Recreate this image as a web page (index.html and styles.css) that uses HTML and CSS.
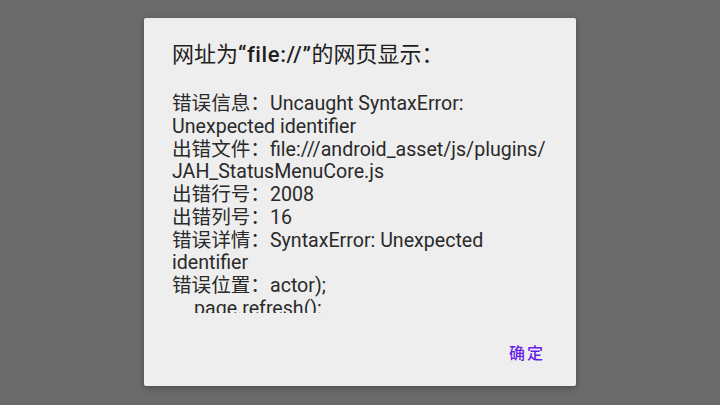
FILE: index.html
```html
<!DOCTYPE html>
<html lang="zh">
<head>
<meta charset="utf-8">
<link rel="stylesheet" href="styles.css">
</head>
<body>
<div class="dialog">
  <div class="title">网址为<span class="q">“file://”</span>的网页显示：</div>
  <div class="message">错误信息：Uncaught SyntaxError: Unexpected identifier
出错文件：file:///android_asset/js/plugins/<wbr>JAH_StatusMenuCore.js
出错行号：2008
出错列号：16
错误详情：SyntaxError: Unexpected identifier
错误位置：actor);
<span class="indent">page.refresh();</span>
</div>
  <div class="actions"><span class="btn">确定</span></div>
</div>
</body>
</html>
```
FILE: styles.css
```css
html, body {
  margin: 0;
  padding: 0;
}
body {
  width: 720px;
  height: 405px;
  background: #6b6b6b;
  overflow: hidden;
  font-family: Roboto, "Noto Sans CJK SC", sans-serif;
}
.dialog {
  margin: 18px 0 0 144px;
  width: 432px;
  height: 368px;
  background: #eeeeee;
  border-radius: 2px;
  box-sizing: border-box;
  padding: 24px 28px 0 28px;
  display: flex;
  flex-direction: column;
  box-shadow: 0 2px 6px rgba(0,0,0,0.3);
}
.title {
  font-size: 22px;
  line-height: 26px;
  color: #1e1e1e;
}
.title .q {
  font-weight: 500;
  letter-spacing: 0.6px;
}
.message {
  margin-top: 25px;
  height: 220px;
  overflow: hidden;
  font-size: 19.6px;
  line-height: 22.75px;
  color: #2a2a2a;
  white-space: pre-wrap;
  word-break: break-word;
}
.indent {
  padding-left: 22px;
}
.actions {
  display: flex;
  justify-content: flex-end;
  margin-top: 29px;
  padding-right: 3px;
}
.btn {
  font-size: 16px;
  line-height: 24px;
  font-weight: 500;
  letter-spacing: 2px;
  color: #6a1ee8;
}
```
